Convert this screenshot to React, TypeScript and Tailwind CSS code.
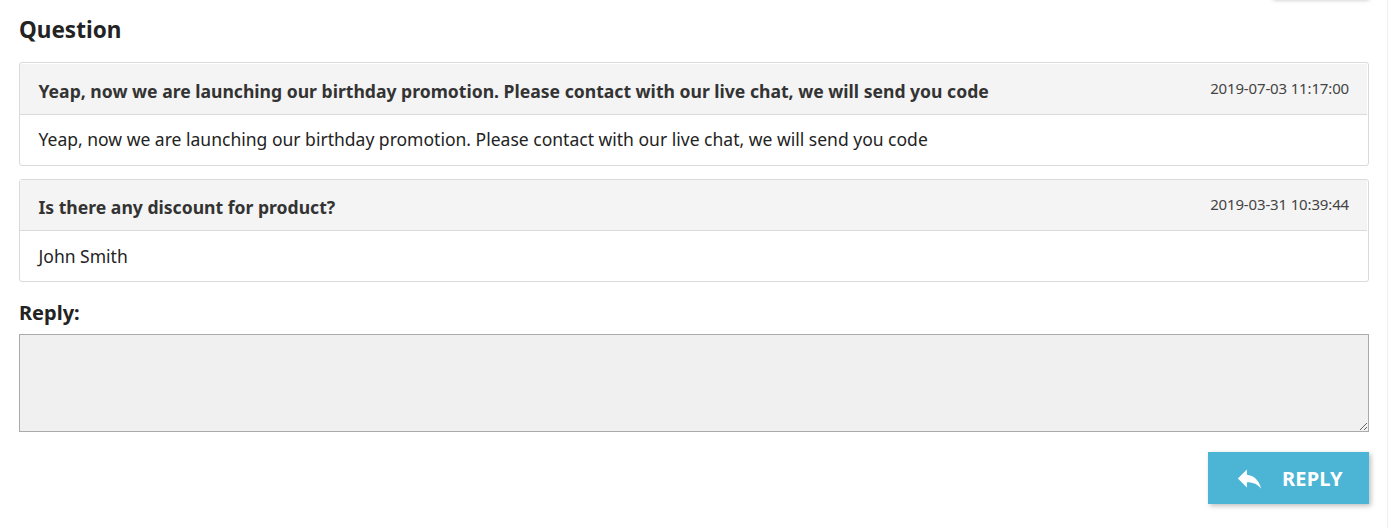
import { MdReply } from "react-icons/md"

const messages = [
  {
    title: "Yeap, now we are launching our birthday promotion. Please contact with our live chat, we will send you code",
    date: "2019-07-03 11:17:00",
    body: "Yeap, now we are launching our birthday promotion. Please contact with our live chat, we will send you code",
  },
  {
    title: "Is there any discount for product?",
    date: "2019-03-31 10:39:44",
    body: "John Smith",
  },
]

export default function App() {
  return (
    <div className="relative h-[528px] overflow-hidden bg-white px-[19px] font-['Noto_Sans',sans-serif] text-[#232323]">
      {/* Bottom edge of the button above and the page's right border */}
      <div className="absolute -top-10 right-[19px] h-10 w-[96px] bg-white shadow-[0_0_4px_rgba(0,0,0,0.25)]" />
      <div className="absolute inset-y-0 right-0 w-px bg-[#f0f0f0]" />

      <h1 className="pt-[15px] text-[22.5px] leading-[30px] font-bold">Question</h1>

      <div className="mt-[17px] flex flex-col gap-[13px]">
        {messages.map((message) => (
          <article key={message.date} className="group h-[103px] rounded-[3px] border border-[#d9dadb] first:h-[104px]">
            <header className="mr-px flex h-[51px] justify-between border-b border-[#d9dadb] bg-[#f4f4f4] pr-[18px] pl-[18.5px] group-first:mt-px">
              <h2 className="pt-[14px] text-[17.59px] leading-[26px] font-bold text-[#333]">{message.title}</h2>
              <time className="pt-3 text-[15px] leading-[24px] tracking-[-0.15px] text-[#444]">{message.date}</time>
            </header>
            <p className="px-[18.5px] pt-3 text-[17.52px] leading-[26px] group-first:pt-[11px]">{message.body}</p>
          </article>
        ))}
      </div>

      <label htmlFor="reply" className="mt-[17px] block text-[20px] leading-7 font-bold">
        Reply:
      </label>
      <textarea id="reply" className="mt-[7px] block h-[98px] w-full border border-[#aaa] bg-[#f0f0f0]" />

      <div className="mt-5 flex justify-end">
        <button className="flex h-[52px] w-[161px] items-center bg-[#4cb5d5] pl-[26px] text-[20px] font-bold text-white shadow-[2px_2px_5px_rgba(0,0,0,0.25)]">
          <MdReply className="mr-[17px] size-[31px]" />
          <span className="pt-0.5 tracking-[0.2px]">REPLY</span>
        </button>
      </div>
    </div>
  )
}
